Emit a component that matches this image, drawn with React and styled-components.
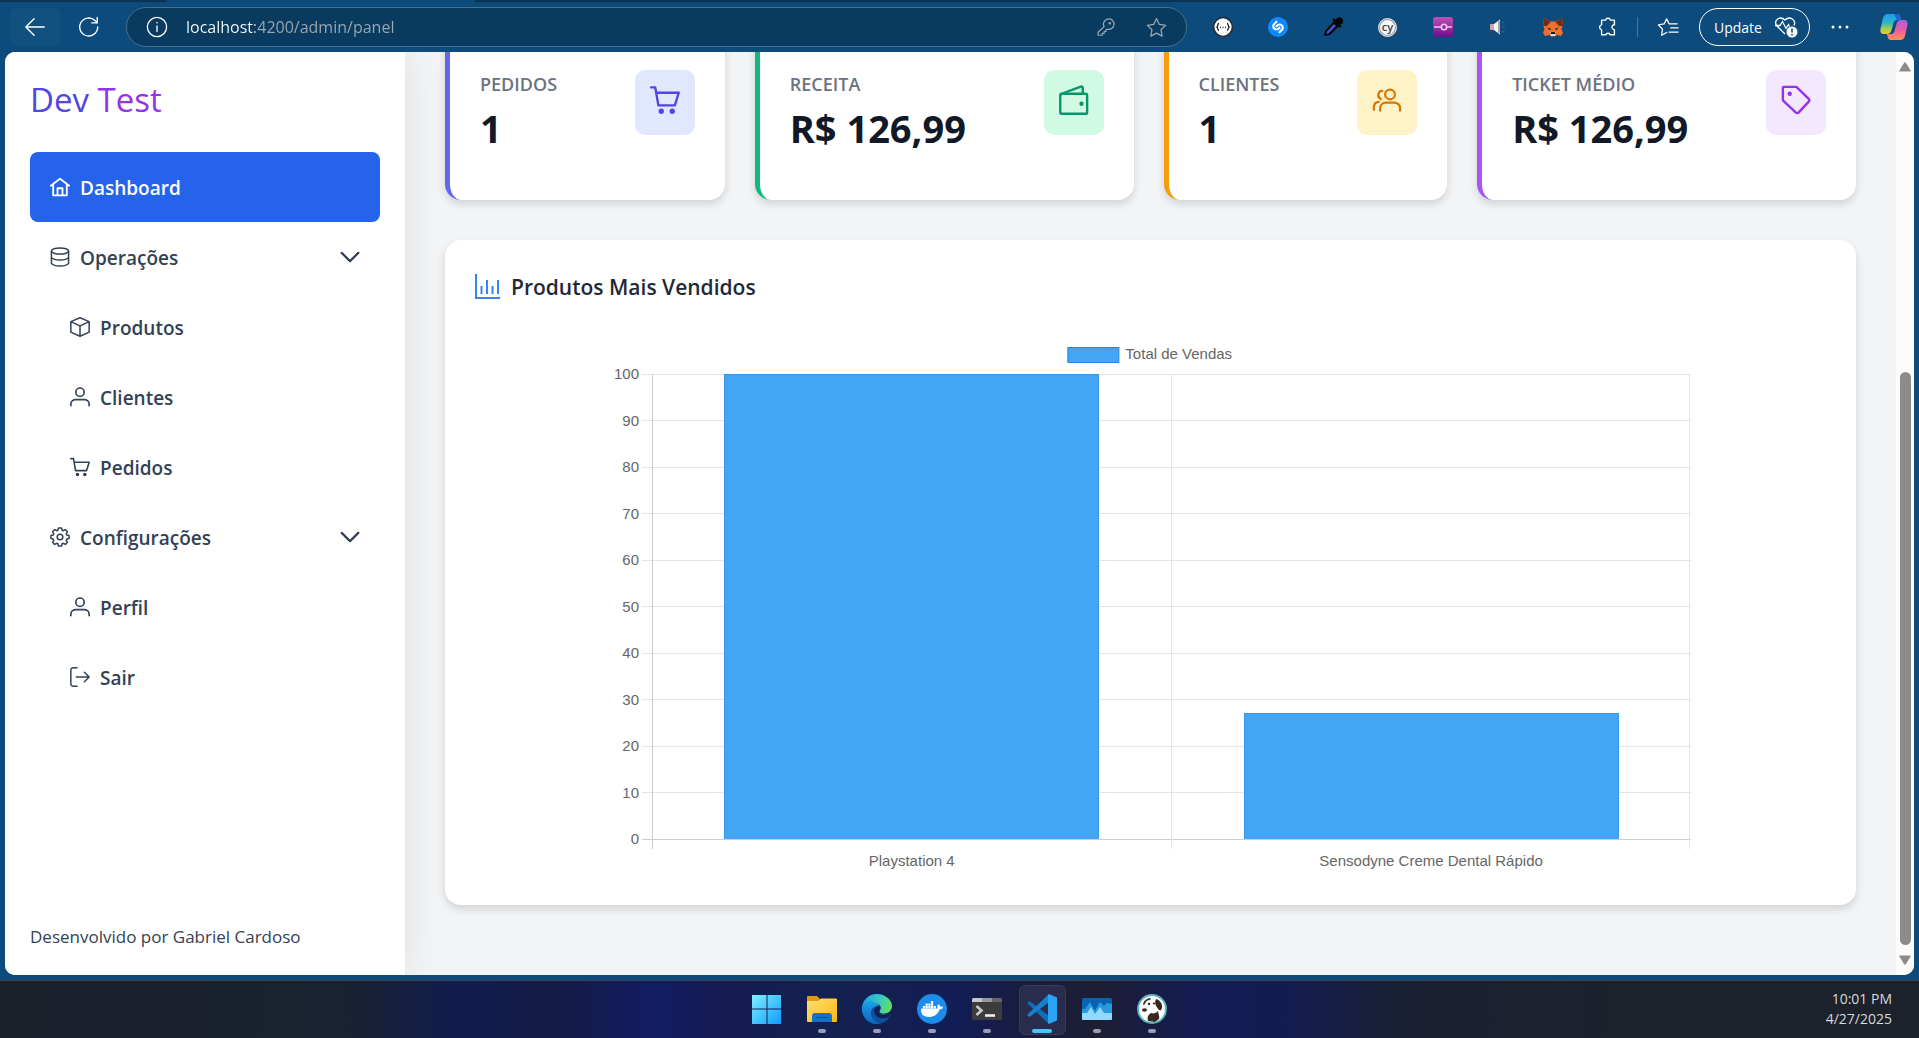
import React from 'react';
import styled, { createGlobalStyle } from 'styled-components';
import { SiDocker, SiShazam } from 'react-icons/si';

const uiFont = '"Segoe UI", "Open Sans", "Noto Sans", sans-serif';

const GlobalStyle = createGlobalStyle`
  * { box-sizing: border-box; }
  body { margin: 0; background: #0c4b7c; font-family: ${uiFont}; }
  button, input { font: inherit; }
  button { border: 0; padding: 0; background: none; color: inherit; cursor: pointer; }
  h1, h2, p, ul { margin: 0; padding: 0; }
  ul { list-style: none; }
  a { color: inherit; text-decoration: none; }
`;

/* ---------- Window shell ---------- */

const Screen = styled.div`
  display: flex;
  flex-direction: column;
  height: 100vh;
  overflow: hidden;
  background: #0c4b7c;
`;

const Toolbar = styled.header`
  flex: none;
  display: flex;
  align-items: center;
  height: 52px;
  padding: 2px 0 0 10px;
  color: #fff;
  background:
    linear-gradient(#0a3454, #0a3454) 0 0 / 167px 2px no-repeat,
    linear-gradient(#0a3454, #0a3454) 475px 0 / 100% 2px no-repeat,
    #0c4b7c;
`;

const ToolButton = styled.button`
  display: flex;
  align-items: center;
  justify-content: center;
  flex: none;
  width: ${(p) => p.$width || 55}px;
  height: 38px;
  border-radius: 6px;
  background: ${(p) => (p.$raised ? '#12507f' : 'transparent')};
`;

const AddressBar = styled.div`
  flex: 1;
  display: flex;
  align-items: center;
  height: 40px;
  margin: 0 8px;
  padding: 0 5px;
  border: 1px solid #47708f;
  border-radius: 20px;
  background: #093a5f;
`;

const AddressInput = styled.input`
  flex: 1;
  min-width: 0;
  padding: 0 0 0 4px;
  border: 0;
  outline: 0;
  font-size: 16px;
  color: transparent;
  background: linear-gradient(90deg, #fff 73px, #9da9b1 73px);
  background-clip: text;
  -webkit-background-clip: text;
`;

const ToolDivider = styled.span`
  width: 1px;
  height: 20px;
  margin: 0 2px;
  background: #4a7595;
`;

const UpdateButton = styled.button`
  display: flex;
  align-items: center;
  justify-content: space-between;
  width: 111px;
  height: 38px;
  margin: 0 1px 0 4px;
  padding: 0 11px 0 14px;
  border: 1px solid #fff;
  border-radius: 19px;
  font-size: 14px;
`;

const Viewport = styled.div`
  flex: 1;
  min-height: 0;
  display: flex;
  margin: 0 5px 5px;
  border-radius: 10px;
  overflow: hidden;
  background: #f2f4f6;
`;

/* ---------- Sidebar ---------- */

const Sidebar = styled.aside`
  flex: none;
  display: flex;
  flex-direction: column;
  width: 400px;
  padding: 20px 25px;
  background: #fff;
  color: #334155;
  box-shadow: 0 0 40px rgba(0, 0, 0, 0.09);
  z-index: 1;
`;

const Brand = styled.h1`
  height: 80px;
  font-size: 33px;
  line-height: 56px;
  font-weight: 500;
  color: #4f46e5;
  span { color: #9333ea; }
`;

const NavLink = styled.a`
  display: flex;
  align-items: center;
  gap: 10px;
  height: 70px;
  padding: 0 20px 0 ${(p) => (p.$nested ? 40 : 20)}px;
  border-radius: 8px;
  font-size: 19px;
  font-weight: 600;
  color: ${(p) => (p.$active ? '#fff' : '#334155')};
  background: ${(p) => (p.$active ? '#2563eb' : 'transparent')};
`;

const NavToggle = styled(NavLink).attrs({ as: 'button', type: 'button' })`
  width: 100%;
  text-align: left;
`;

const NavText = styled.span`
  flex: 1;
  padding-top: 2px;
`;

const Credits = styled.p`
  margin-top: auto;
  font-size: 17px;
  line-height: 36px;
`;

/* ---------- Dashboard ---------- */

const Main = styled.main`
  flex: 1;
  min-width: 0;
  display: flex;
  flex-direction: column;
  justify-content: flex-end;
  gap: 40px;
  padding: 0 40px 70px;
  overflow: hidden;
`;

const Stats = styled.section`
  display: flex;
  gap: 30px;
`;

const StatCard = styled.article`
  flex: 1 1 auto;
  display: flex;
  align-items: flex-start;
  justify-content: space-between;
  height: 180px;
  padding: 50px 30px 0;
  border-left: 5px solid ${(p) => p.$color};
  border-radius: 16px;
  background: #fff;
  box-shadow: 0 4px 8px rgba(0, 0, 0, 0.14);
`;

const StatLabel = styled.h2`
  font-size: 18px;
  line-height: 28px;
  font-weight: 600;
  color: #6b7280;
`;

const StatValue = styled.p`
  margin-top: 2px;
  font-size: 38px;
  line-height: 56px;
  font-weight: 700;
  color: #111827;
`;

const StatIcon = styled.span`
  display: flex;
  justify-content: center;
  width: 60px;
  height: 65px;
  padding-top: 15px;
  border-radius: 10px;
  color: ${(p) => p.$color};
  background: ${(p) => p.$tint};
`;

const Panel = styled.section`
  padding: 30px;
  border-radius: 16px;
  background: #fff;
  box-shadow: 0 4px 8px rgba(0, 0, 0, 0.14);
`;

const PanelTitle = styled.h2`
  display: flex;
  align-items: center;
  gap: 10px;
  height: 35px;
  margin-bottom: 30px;
  font-size: 21px;
  font-weight: 600;
  color: #1f2937;
`;

const ChartSvg = styled.svg`
  display: block;
  width: 80%;
  margin: 0 auto;
  font-family: Arial, "Liberation Sans", sans-serif;
  font-size: 15px;
  fill: #666;
`;

/* ---------- Scrollbar ---------- */

const Scrollbar = styled.div`
  flex: none;
  display: flex;
  flex-direction: column;
  align-items: center;
  width: 18px;
  background: #fcfcfc;
`;

const ScrollArrow = styled.button`
  display: flex;
  align-items: center;
  justify-content: center;
  width: 18px;
  height: 30px;
`;

const ScrollTrack = styled.div`
  flex: 1;
  display: flex;
  align-items: flex-end;
`;

const ScrollThumb = styled.div`
  width: 11px;
  height: 66.4%;
  border-radius: 6px;
  background: #8b8b8b;
`;

/* ---------- Taskbar ---------- */

const Taskbar = styled.footer`
  flex: none;
  display: grid;
  grid-template-columns: 1fr auto 1fr;
  height: 58px;
  border-top: 1px solid #3d4450;
  background: linear-gradient(90deg, #1b212b 0%, #1a2130 18%, #101d4e 24%, #141b45 29%, #121c62 34%, #151b52 38%, #132150 43%, #131f52 47%, #121d55 50%, #181c42 53%, #1d1e34 57%, #1a1d3e 59%, #121c55 63%, #131c50 67%, #1a2033 73%, #1c222b 85%, #1c222b 100%);
`;

const TaskApps = styled.nav`
  grid-column: 2;
  display: flex;
`;

const TaskApp = styled.button`
  display: flex;
  flex-direction: column;
  align-items: center;
  width: 47px;
  height: 50px;
  margin: 4px;
  padding-top: 8px;
  border: 1px solid ${(p) => (p.$active ? '#383b58' : 'transparent')};
  border-radius: 6px;
  background: ${(p) => (p.$active ? '#292c4c' : 'transparent')};
`;

const TaskMark = styled.span`
  width: ${(p) => (p.$active ? 20 : 8)}px;
  height: 4px;
  margin-top: 5px;
  border-radius: 2px;
  background: ${(p) => (p.$active ? '#4cc2ff' : '#9a9db5')};
  visibility: ${(p) => (p.$hidden ? 'hidden' : 'visible')};
`;

const Clock = styled.div`
  display: flex;
  flex-direction: column;
  justify-content: center;
  padding: 0 27px 2px 0;
  text-align: right;
  font-size: 14px;
  line-height: 20px;
  color: #d5d8dc;
`;

/* ---------- Icons ---------- */

const Icon = ({ size = 20, w = 1.8, box = 24, children }) => (
  <svg
    width={size}
    height={size}
    viewBox={`0 0 ${box} ${box}`}
    fill="none"
    stroke="currentColor"
    strokeWidth={w}
    strokeLinecap="round"
    strokeLinejoin="round"
    aria-hidden="true"
  >
    {children}
  </svg>
);

const HomeIcon = () => (
  <Icon w={2.2}>
    <path d="M1 10.5L12 2.2l11 8.3M3.8 9v13h16.4V9M9 22v-8.5h6V22" />
  </Icon>
);
const DatabaseIcon = () => (
  <Icon>
    <ellipse cx="12" cy="4.8" rx="10.3" ry="3.7" />
    <path d="M1.7 4.8v14.4c0 2 4.6 3.7 10.3 3.7s10.3-1.7 10.3-3.7V4.8M1.7 12c0 2 4.6 3.7 10.3 3.7s10.3-1.7 10.3-3.7" />
  </Icon>
);
const BoxIcon = () => (
  <Icon>
    <path d="M12 .9l11 4.7v12.6L12 23.1 1 18.2V5.6zM1 5.6l11 5 11-5M12 10.6v12.5" />
  </Icon>
);
const UserIcon = () => (
  <Icon w={2}>
    <circle cx="12" cy="6.2" r="5" />
    <path d="M1 22.5v-2c0-3.4 2.8-5.4 6-5.4h10c3.2 0 6 2 6 5.4v2" />
  </Icon>
);
const CartIcon = ({ size }) => (
  <Icon size={size} w={1.9}>
    <path d="M.9 1.9h3.3l2.5 14.4h13.2L23 6.2H5" />
    <circle cx="9" cy="21" r="1.2" fill="currentColor" />
    <circle cx="17.8" cy="21" r="1.2" fill="currentColor" />
  </Icon>
);
const CogIcon = () => {
  const points = [];
  for (let i = 0; i < 8; i += 1) {
    const a = (i * Math.PI) / 4;
    [[-0.3, 8.5], [-0.17, 11], [0.17, 11], [0.3, 8.5]].forEach(([da, r]) => {
      points.push(`${12 + Math.sin(a + da) * r},${12 - Math.cos(a + da) * r}`);
    });
  }
  return (
    <Icon>
      <polygon points={points.join(' ')} />
      <circle cx="12" cy="12" r="3.4" />
    </Icon>
  );
};
const SignOutIcon = () => (
  <Icon>
    <path d="M8.5 1H3.5A2.5 2.5 0 0 0 1 3.5v17A2.5 2.5 0 0 0 3.5 23h5M7.5 12H23M17.3 6.3L23 12l-5.7 5.7" />
  </Icon>
);
const ChevronIcon = () => (
  <Icon w={2.7}>
    <path d="M2 7l10 10L22 7" />
  </Icon>
);
const WalletIcon = () => (
  <Icon size={30} w={1.9}>
    <rect x="1" y="7" width="21.5" height="16" rx="1.3" />
    <path d="M1.5 7.2L17.5 1.3q1.5-.3 1.5 1V7" />
    <circle cx="18" cy="15" r=".8" fill="currentColor" />
  </Icon>
);
const UsersIcon = () => (
  <Icon size={30} w={1.8}>
    <circle cx="14.4" cy="7.5" r="3.9" />
    <path d="M6.5 20.5v-1.8c0-2.7 2-4.7 4.7-4.7h6.4c2.7 0 4.9 2 4.9 4.7v1.8M8.3 4.8c-3.2-.3-4.8 4.4-1.3 6.4M1.5 19.8v-2c0-2.500 1.500-4.200 4-4.300" />
  </Icon>
);
const TagIcon = () => (
  <Icon size={30} w={1.9}>
    <path d="M2.3 1.5h10l9.7 9.4c.8.8.8 1.8 0 2.6l-7.8 8.4c-.7.8-1.7.8-2.5 0L1.500 12.300v-10q0-.8.8-.8z" />
    <circle cx="7" cy="7" r=".8" fill="currentColor" />
  </Icon>
);
const ChartIcon = () => (
  <svg width="26" height="26" viewBox="0 0 26 26" fill="none" stroke="#3b82f6" strokeWidth="2" aria-hidden="true">
    <path d="M1 0v24h24M6.500 12v8M12 6v14M17.500 12v8M23 6v14" />
  </svg>
);

const BackIcon = () => <Icon size={22} w={1.5}><path d="M22 12H2M11 3l-9 9 9 9" /></Icon>;
const ReloadIcon = () => <Icon size={22} w={1.5}><path d="M21.500 12a9.800 9.800 0 1 1-2.900-7L21 7.500M21 1.500v6h-6" /></Icon>;
const InfoIcon = () => <Icon size={22} w={1.4}><circle cx="12" cy="12" r="10.5" /><path d="M12 10.800V17M12 7v.6" /></Icon>;
const KeyIcon = () => (
  <Icon size={18} w={1.6}>
    <path d="M9.500 11.500A7 7 0 1 1 14 15l-2 .5v2.500H9.500v2.500H7V23H1.500v-4z" />
    <circle cx="17" cy="7" r="1" />
  </Icon>
);
const starPath = 'M12 1.800l3.200 6.700 7.200 1-5.200 5.100 1.300 7.300-6.500-3.500-6.500 3.500 1.300-7.300-5.200-5.100 7.200-1z';
const StarIcon = () => <Icon size={21} w={1.4}><path d={starPath} /></Icon>;
const BracesIcon = () => (
  <svg width="20" height="20" viewBox="0 0 20 20" fill="none" stroke="#222" strokeWidth="1.300" aria-hidden="true">
    <circle cx="10" cy="10" r="9.300" fill="#fff" />
    <path d="M6 6.500c-1.800 0-.6 2.700-2.200 3.500 1.600.8.4 3.500 2.200 3.500M14 6.500c1.800 0 .6 2.700 2.200 3.500-1.600.8-.4 3.500-2.200 3.500M7 10.500h1M9.500 10.500h1M12 10.500h1" />
  </svg>
);
const ShazamWrap = styled.span`
  display: flex;
  padding: 1px;
  border-radius: 50%;
  color: #0a88ff;
  background: radial-gradient(#fff 60%, #0a88ff 62%);
`;
const PipetteIcon = () => (
  <svg width="20" height="20" viewBox="0 0 20 20" aria-hidden="true">
    <path d="M1 19l1-5 9-10 5 5-9 9z" fill="#050505" />
    <path d="M3 17l1-2.500L11 7l2 2-7.500 7.500z" fill="#4653c9" />
    <path d="M9 2.500l2-1 2 1.500c1-3 4-3.500 6-1.500s1.500 5-1.500 6l1 2-1.500 1.500z" fill="#050505" />
  </svg>
);
const BadgeCircle = styled.span`
  display: flex;
  align-items: center;
  justify-content: center;
  width: 19px;
  height: 19px;
  padding-bottom: 2px;
  border: 1px solid #ddd;
  border-radius: 50%;
  font-size: 11px;
  line-height: 13px;
  font-weight: 600;
  color: #3b4046;
  background: #f7f7f7;
  box-shadow: inset 0 0 0 1px #8b9095;
`;
const CommitIcon = () => (
  <svg width="20" height="20" viewBox="0 0 20 20" fill="none" stroke="#f2c8f0" strokeWidth="1.600" aria-hidden="true">
    <defs>
      <linearGradient id="commit" x1="0" y1="0" x2="0" y2="1"><stop stopColor="#c24fb4" /><stop offset="1" stopColor="#6a0e8f" /></linearGradient>
    </defs>
    <rect width="20" height="20" rx="2.500" fill="url(#commit)" stroke="none" />
    <path d="M1 10h7M14 10h5" /><circle cx="11" cy="10" r="2.700" />
  </svg>
);
const SpeakerIcon = () => (
  <svg width="20" height="20" viewBox="0 0 20 20" aria-hidden="true">
    <rect x="2" y="7" width="5" height="6" rx="1" fill="#d9a3a3" />
    <path d="M6 7l6-4.500v15L6 13z" fill="#f4f4f4" />
    <path d="M11 4v12" stroke="#555" />
    <path d="M14 6l2-1M14 10h3M14 14l2 1" stroke="#44617b" />
  </svg>
);
const FoxIcon = () => (
  <svg width="20" height="20" viewBox="0 0 20 20" aria-hidden="true">
    <path d="M1 1l6 3.500h6L19 1l1 7-1.500 4L20 16l-2 3-4-1-2 1.500H8L6 18l-4 1-2-3 1.500-4L0 8z" fill="#f0702b" />
    <path d="M1 1l6.500 4L4 9H0zM19 1l-6.500 4L16 9h4z" fill="#6e2f16" />
    <path d="M4 10.500l4 1-1 2zM16 10.500l-4 1 1 2z" fill="#283548" />
    <path d="M7 15h6l-1 4H8z" fill="#ddd" />
    <path d="M8 15h4l.5 2h-5z" fill="#1e1e22" />
  </svg>
);
const PuzzleIcon = () => (
  <Icon size={22} w={1.5}>
    <path d="M5 4.500h4.300a2.800 2.800 0 0 1 5.400 0H19V9.500h-.5a2.700 2.700 0 0 0 0 5.300h.5V20.500h-4.700a2.400 2.400 0 0 0-4.600 0H5v-5.400a2.900 2.900 0 0 1 0-5.600z" />
  </Icon>
);
const FavouritesIcon = () => (
  <Icon size={22} w={1.4}>
    <path d="M10.500 18l-5.500 3 1-6.500L1.500 9.700l6.300-1L10.500 3l2.700 5.500H22M15 13h8M13 17.500h10" />
  </Icon>
);
const HeartPulseIcon = () => (
  <svg width="24" height="24" viewBox="0 0 24 24" fill="none" stroke="#fff" strokeWidth="1.300" aria-hidden="true">
    <path d="M11 19l-8.500-8.500C-.5 5 6 .5 11 5c5-4.500 11.500 0 9 5.500M1 10.500h5l2.500-4 3.500 7 2.500-4 1 2" />
    <circle cx="18" cy="17" r="5.500" fill="#fff" stroke="none" />
    <path d="M18 13.500v4M18 19v1.500" stroke="#0c4b7c" strokeWidth="1.600" />
  </svg>
);
const DotsIcon = () => (
  <svg width="18" height="18" viewBox="0 0 18 18" fill="#fff" aria-hidden="true">
    <circle cx="2" cy="9" r="1.500" /><circle cx="9" cy="9" r="1.500" /><circle cx="16" cy="9" r="1.500" />
  </svg>
);
const CopilotIcon = () => (
  <svg width="28" height="28" viewBox="0 0 28 28" aria-hidden="true">
    <defs>
      <linearGradient id="cpA" x1="0" y1="0" x2="0" y2="1"><stop stopColor="#1b9bf0" /><stop offset=".45" stopColor="#2fb6c4" /><stop offset=".75" stopColor="#a8cf4a" /><stop offset="1" stopColor="#f3c62c" /></linearGradient>
      <linearGradient id="cpB" x1="0" y1="0" x2="0" y2="1"><stop stopColor="#a463ea" /><stop offset=".5" stopColor="#ef5a9b" /><stop offset="1" stopColor="#ff9350" /></linearGradient>
    </defs>
    <path d="M8 1h9c2 0 3 1.500 3.500 3.500L21 7h-4c-2 0-3 1-3.500 3l-2 7c-.7 2.500-2 4-4.500 4H4c-3 0-4-2-3.500-5L3 5c.7-2.500 2.500-4 5-4z" fill="url(#cpA)" />
    <path d="M20 27h-9c-2 0-3-1.500-3.500-3.500L7 21h4c2 0 3-1 3.500-3l2-7c.7-2.500 2-4 4.500-4h3c3 0 4 2 3.500 5L25 23c-.7 2.500-2.500 4-5 4z" fill="url(#cpB)" />
    <path d="M14 1h3c2 0 3 1.500 3.500 3.500L21 7h-4z" fill="#1769c9" />
  </svg>
);
const ArrowGlyph = ({ down }) => (
  <svg width="12" height="10" viewBox="0 0 12 10" fill="#8b8b8b" aria-hidden="true">
    <path d={down ? 'M1 .5h10q1 0 .6 1L7 9q-1 1.500-2 0L.4 1.500Q0 .5 1 .5z' : 'M1 9.500h10q1 0 .6-1L7 1Q6-.5 5 1L.4 8.500q-.4 1 .6 1z'} />
  </svg>
);

const StartIcon = () => (
  <svg width="30" height="30" viewBox="0 0 30 30" aria-hidden="true">
    <defs><linearGradient id="win" x1="0" y1="0" x2="1" y2="1"><stop stopColor="#7df0ff" /><stop offset="1" stopColor="#0f9bff" /></linearGradient></defs>
    <path d="M0 1h14.500v13.500H0zM15.500 1H29v13.500H15.500zM0 15.500h14.500V30H0zM15.500 15.500H29V30H15.500z" fill="url(#win)" />
  </svg>
);
const FolderIcon = () => (
  <svg width="30" height="30" viewBox="0 0 30 30" aria-hidden="true">
    <defs><linearGradient id="fold" x1="0" y1="0" x2="1" y2="1"><stop stopColor="#ffdf70" /><stop offset="1" stopColor="#fdb813" /></linearGradient></defs>
    <path d="M0 3q0-1 1-1h9l3 3-2 4H0z" fill="#e19b0a" />
    <path d="M0 7h11l3-2.500h15q1 0 1 1V27q0 1-1 1H1q-1 0-1-1z" fill="url(#fold)" />
    <path d="M5 28v-6q0-3 3-3h14q3 0 3 3v6z" fill="#1173c8" /><path d="M9 23.500h12" stroke="#0a4c8c" />
  </svg>
);
const EdgeIcon = () => (
  <svg width="30" height="30" viewBox="0 0 30 30" aria-hidden="true">
    <defs>
      <linearGradient id="edA" x1="0" y1=".3" x2="1" y2=".5"><stop stopColor="#1da0e0" /><stop offset=".55" stopColor="#35c8c4" /><stop offset="1" stopColor="#64e05a" /></linearGradient>
      <linearGradient id="edB" x1="0" y1="0" x2="0" y2="1"><stop stopColor="#1ba4e6" /><stop offset="1" stopColor="#0c62c0" /></linearGradient>
    </defs>
    <circle cx="15" cy="15" r="15" fill="#0f4f9e" />
    <path d="M17 12h14v8.500h-8z" fill="#131f52" />
    <path d="M0 15C0 6 7 0 15 0s15 6 15 12c0 5-4 7.500-8 7.500-3.500 0-5-1.500-4-3 2-3 0-7-4-7C7 9.500 0 12 0 15z" fill="url(#edA)" />
    <path d="M0 15c0-6 5-9 10-8 4 1 6 3 6.500 5-6 0-9 5-7 10 1.500 4 5 7 8.500 7.700C8 32 0 24 0 15z" fill="url(#edB)" />
    <path d="M16 12c-4 1-5 6-2 9.500 3 3.500 9 3.500 13.500 1l1-3c-4 2-7 1.500-9.500.5-2-1-2.500-2.500-1-4.500 1-1.500 0-3-2-3.500z" fill="#141f56" />
  </svg>
);
const DockerBadge = styled.span`
  display: flex;
  align-items: center;
  justify-content: center;
  width: 30px;
  height: 30px;
  border-radius: 50%;
  color: #fff;
  background: #1d8ceb;
`;
const TerminalIcon = () => (
  <svg width="30" height="30" viewBox="0 0 30 30" aria-hidden="true">
    <rect y="4" width="30" height="22" rx="1.500" fill="#3c3c3c" />
    <path d="M0 8V5.500Q0 4 1.500 4H10v4z" fill="#c8c8c8" /><path d="M10 4h10v4H10z" fill="#999" /><path d="M20 4h8.500Q30 4 30 5.500V8H20z" fill="#666" />
    <path d="M4.500 12l5 4.500-5 4.500" fill="none" stroke="#ccc" strokeWidth="2.600" /><path d="M13 21.500h10" stroke="#eee" strokeWidth="2.600" />
  </svg>
);
const CodeIcon = () => (
  <svg width="30" height="30" viewBox="0 0 30 30" aria-hidden="true">
    <path d="M0 9l2.500-2L22 22v8z" fill="#0d6fb8" />
    <path d="M0 21l2.500 2L22 8V0z" fill="#1283cf" />
    <path d="M22 0l8 3.500v23L22 30l-1-1V1z" fill="#29a3f2" />
  </svg>
);
const MonitorIcon = () => (
  <svg width="30" height="30" viewBox="0 0 30 30" aria-hidden="true">
    <rect y="4" width="30" height="22" rx="1.500" fill="#0b62b0" />
    <path d="M0 15h3l5-7 5 9 5-9 4 4 3-3 5 1v16H0z" fill="#2899dd" />
    <path d="M0 19h5l4-6 4 7 5-7 4 6h8v5.500q0 1.500-1.500 1.500h-27Q0 26 0 24.500z" fill="#90d9ff" />
  </svg>
);
const BeaverIcon = () => (
  <svg width="30" height="30" viewBox="0 0 30 30" aria-hidden="true">
    <circle cx="15" cy="15" r="14" fill="#fff" stroke="#56b7ba" strokeWidth="2" />
    <path d="M11 27c-1-4 0-6 3-8 3 1 5 0 7-2 0 3 2 5 1 8l-4 3z" fill="#382923" />
    <path d="M6 11c0-4 4-7 8-7l-1 2c-3 0-4 1-5 4zM19 5c4 1 7 5 6 9-1 3-2 3-4 1-2-3-4-6-2-10z" fill="#382923" />
    <circle cx="12" cy="10" r="1.200" fill="#382923" />
    <ellipse cx="7.500" cy="16" rx="2.500" ry="1.800" fill="#382923" />
    <circle cx="17" cy="9.500" r="1.100" fill="#382923" />
  </svg>
);

/* ---------- Data ---------- */

const stats = [
  { label: 'PEDIDOS', value: '1', border: '#6366f1', color: '#4f46e5', tint: '#e0e7ff', icon: <CartIcon size={30} /> },
  { label: 'RECEITA', value: 'R$ 126,99', border: '#10b981', color: '#059669', tint: '#d1fae5', icon: <WalletIcon /> },
  { label: 'CLIENTES', value: '1', border: '#f59e0b', color: '#d97706', tint: '#fef3c7', icon: <UsersIcon /> },
  { label: 'TICKET MÉDIO', value: 'R$ 126,99', border: '#a855f7', color: '#9333ea', tint: '#f3e8ff', icon: <TagIcon /> },
];

const menu = [
  { label: 'Dashboard', icon: <HomeIcon />, active: true },
  {
    label: 'Operações',
    icon: <DatabaseIcon />,
    items: [
      { label: 'Produtos', icon: <BoxIcon /> },
      { label: 'Clientes', icon: <UserIcon /> },
      { label: 'Pedidos', icon: <CartIcon /> },
    ],
  },
  {
    label: 'Configurações',
    icon: <CogIcon />,
    items: [
      { label: 'Perfil', icon: <UserIcon /> },
      { label: 'Sair', icon: <SignOutIcon /> },
    ],
  },
];

const extensions = [
  ['JSON', <BracesIcon />],
  ['Shazam', <ShazamWrap><SiShazam size={18} /></ShazamWrap>],
  ['Color picker', <PipetteIcon />],
  ['Cypress', <BadgeCircle>cy</BadgeCircle>],
  ['Commits', <CommitIcon />],
  ['Volume', <SpeakerIcon />],
  ['Wallet', <FoxIcon />],
  ['Extensions', <PuzzleIcon />],
];

const apps = [
  { name: 'Start', icon: <StartIcon />, idle: true },
  { name: 'File Explorer', icon: <FolderIcon /> },
  { name: 'Edge', icon: <EdgeIcon /> },
  { name: 'Docker', icon: <DockerBadge><SiDocker size={22} /></DockerBadge> },
  { name: 'Terminal', icon: <TerminalIcon /> },
  { name: 'Code', icon: <CodeIcon />, active: true },
  { name: 'Monitor', icon: <MonitorIcon /> },
  { name: 'DBeaver', icon: <BeaverIcon /> },
];

const sales = [
  { name: 'Playstation 4', total: 100 },
  { name: 'Sensodyne Creme Dental Rápido', total: 27 },
];

/* ---------- Parts ---------- */

const plot = { left: 42, right: 1080, top: 39, bottom: 504 };

function SalesChart() {
  const step = (plot.bottom - plot.top) / 10;
  const slot = (plot.right - plot.left) / sales.length;
  const barWidth = slot * 0.72;
  return (
    <ChartSvg viewBox="0 0 1080 540" role="img" aria-label="Total de Vendas">
      <rect x="457.500" y="12.500" width="51" height="15" fill="#42a5f5" stroke="#1e88e5" />
      <text x="515" y="24">Total de Vendas</text>
      <g shapeRendering="crispEdges">
        {Array.from({ length: 11 }, (_, i) => (
          <line key={i} x1="32" x2={plot.right} y1={plot.top + i * step} y2={plot.top + i * step} stroke={i === 10 ? '#cdcdcd' : '#e5e5e5'} />
        ))}
        {Array.from({ length: sales.length + 1 }, (_, i) => (
          <line key={i} x1={plot.left + i * slot - (i === 2 ? 1 : 0)} x2={plot.left + i * slot - (i === 2 ? 1 : 0)} y1={plot.top} y2={plot.bottom + 10} stroke={i ? '#e5e5e5' : '#cdcdcd'} />
        ))}
        {sales.map((s, i) => {
          const x = plot.left + i * slot + (slot - barWidth) / 2;
          const h = (s.total / 100) * (plot.bottom - plot.top);
          return (
            <g key={s.name}>
              <rect x={x} y={plot.bottom - h} width={barWidth} height={h} fill="#42a5f5" />
              <path d={`M${x} ${plot.bottom}V${plot.bottom - h}H${x + barWidth}V${plot.bottom}`} fill="none" stroke="#3598ec" />
            </g>
          );
        })}
      </g>
      {Array.from({ length: 11 }, (_, i) => (
        <text key={i} x="29" y={plot.top + i * step + 5} textAnchor="end">{100 - i * 10}</text>
      ))}
      {sales.map((s, i) => (
        <text key={s.name} x={plot.left + (i + 0.5) * slot} y="531" textAnchor="middle">{s.name}</text>
      ))}
    </ChartSvg>
  );
}

function Menu() {
  return (
    <nav>
      <ul>
        {menu.map((m) => (
          <li key={m.label}>
            {m.items ? (
              <>
                <NavToggle aria-expanded="true">
                  {m.icon}
                  <NavText>{m.label}</NavText>
                  <ChevronIcon />
                </NavToggle>
                <ul>
                  {m.items.map((s) => (
                    <li key={s.label}>
                      <NavLink href="#" $nested>{s.icon}<NavText>{s.label}</NavText></NavLink>
                    </li>
                  ))}
                </ul>
              </>
            ) : (
              <NavLink href="#" $active={m.active}>{m.icon}<NavText>{m.label}</NavText></NavLink>
            )}
          </li>
        ))}
      </ul>
    </nav>
  );
}

const Muted = styled.span`
  display: flex;
  color: #9da9b1;
`;

export default function App() {
  return (
    <Screen>
      <GlobalStyle />
      <Toolbar>
        <ToolButton $width={50} $raised aria-label="Back"><BackIcon /></ToolButton>
        <ToolButton $width={58} aria-label="Refresh"><ReloadIcon /></ToolButton>
        <AddressBar>
          <ToolButton $width={50} aria-label="Site information"><InfoIcon /></ToolButton>
          <AddressInput aria-label="Address" defaultValue="localhost:4200/admin/panel" />
          <ToolButton $width={50} aria-label="Passwords"><Muted><KeyIcon /></Muted></ToolButton>
          <ToolButton $width={50} aria-label="Add to favorites"><Muted><StarIcon /></Muted></ToolButton>
        </AddressBar>
        {extensions.map(([name, icon]) => (
          <ToolButton key={name} aria-label={name}>{icon}</ToolButton>
        ))}
        <ToolDivider />
        <ToolButton aria-label="Favorites"><FavouritesIcon /></ToolButton>
        <UpdateButton>Update <HeartPulseIcon /></UpdateButton>
        <ToolButton $width={58} aria-label="Settings"><DotsIcon /></ToolButton>
        <ToolButton $width={50} aria-label="Copilot"><CopilotIcon /></ToolButton>
      </Toolbar>

      <Viewport>
        <Sidebar>
          <Brand>Dev <span>Test</span></Brand>
          <Menu />
          <Credits>Desenvolvido por Gabriel Cardoso</Credits>
        </Sidebar>
        <Main>
          <Stats>
            {stats.map((s) => (
              <StatCard key={s.label} $color={s.border}>
                <div>
                  <StatLabel>{s.label}</StatLabel>
                  <StatValue>{s.value}</StatValue>
                </div>
                <StatIcon $color={s.color} $tint={s.tint}>{s.icon}</StatIcon>
              </StatCard>
            ))}
          </Stats>
          <Panel>
            <PanelTitle><ChartIcon />Produtos Mais Vendidos</PanelTitle>
            <SalesChart />
          </Panel>
        </Main>
        <Scrollbar>
          <ScrollArrow aria-label="Scroll up"><ArrowGlyph /></ScrollArrow>
          <ScrollTrack><ScrollThumb /></ScrollTrack>
          <ScrollArrow aria-label="Scroll down"><ArrowGlyph down /></ScrollArrow>
        </Scrollbar>
      </Viewport>

      <Taskbar>
        <TaskApps>
          {apps.map((a) => (
            <TaskApp key={a.name} $active={a.active} aria-label={a.name}>
              {a.icon}
              <TaskMark $active={a.active} $hidden={a.idle} />
            </TaskApp>
          ))}
        </TaskApps>
        <Clock>
          <span>10:01 PM</span>
          <span>4/27/2025</span>
        </Clock>
      </Taskbar>
    </Screen>
  );
}
